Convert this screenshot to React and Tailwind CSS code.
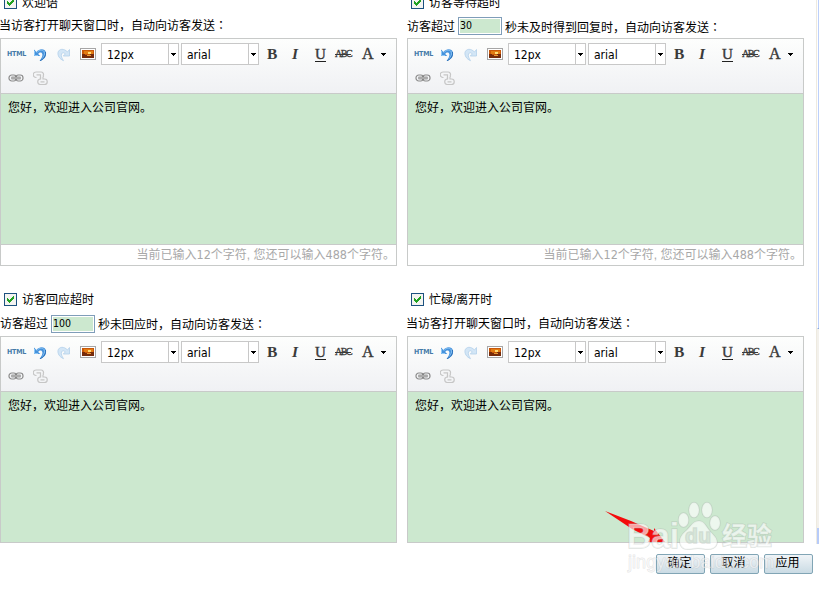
import { useState } from "react";

function Checkbox() {
  return (
    <span className="w-[13px] h-[13px] shrink-0 border border-[#1c5180] bg-[#f4f4f1] flex">
      <svg width="11" height="11" viewBox="0 0 11 11" shapeRendering="crispEdges">
        <path d="M2 4h1v1h1v1h1v-1h1v-1h1v-1h1v-1h1v3h-1v1h-1v1h-1v1h-1v1h-1v-1h-1v-1h-1z" fill="#21a121" />
      </svg>
    </span>
  );
}

function UndoIcon() {
  return (
    <svg width="14" height="14" viewBox="0 0 14 14">
      <path d="M1 1.500v6.500h6.300L5.200 5.900C6.500 4 8.600 4 9.200 5.700c.7 1.900-.4 4.300-2.700 7.300 5-1.300 7.200-5.200 6.400-8.800C12.200.8 6.600-.3 3.400 4z" fill="#4592dc" />
      <path d="M1.500 3v4.500h3.600M3.800 4.700C6 1.900 9.500 1.300 11 3.500c1.200 2.200.1 5-1.500 7" fill="none" stroke="#8fc7f5" strokeWidth="1" />
      <path d="M12.400 4c.7 3.600-1.400 6.900-5.300 8.700" fill="none" stroke="#2a6eb6" strokeWidth="1" />
    </svg>
  );
}

function RedoIcon() {
  return (
    <svg width="14" height="14" viewBox="0 0 14 14">
      <path d="M12.500 1.500v6.500h-6.200l2-2C7.200 4.200 5.200 4.300 4.500 6c-.6 1.900.4 4.300 2 6.700C2.500 11 .4 7.500 1 4.400 2 .5 7.200.2 10.400 4z" fill="#d3e6f6" stroke="#b4d1ea" strokeWidth=".8" />
    </svg>
  );
}

function PictureIcon() {
  return (
    <svg width="16" height="12" viewBox="0 0 16 12" shapeRendering="crispEdges" className="block">
      <rect x=".5" y=".5" width="15" height="11" fill="#fff" stroke="#a6a6a6" />
      <rect x="2" y="2" width="12" height="8" fill="#c95708" />
      <rect x="4" y="3" width="9" height="3" fill="#e27c12" />
      <rect x="8" y="4" width="3" height="2" fill="#ffdc73" />
      <path d="M2 6h3v1h5v-1h4v4H2z" fill="#762b0b" />
      <path d="M7 7h4v1H7z" fill="#e79a34" />
    </svg>
  );
}

function LinkIcon() {
  return (
    <svg width="16" height="8" viewBox="0 0 16 8" fill="none">
      <rect x="1" y="1" width="7.500" height="6" rx="2.800" stroke="#8b8b8b" strokeWidth="1.200" />
      <rect x="7.500" y="1" width="7.500" height="6" rx="2.800" stroke="#8b8b8b" strokeWidth="1.200" />
      <path d="M3.500 4h9" stroke="#666" strokeWidth="2.600" />
      <path d="M4 4h8" stroke="#eee" strokeWidth="1" />
    </svg>
  );
}

function UnlinkIcon() {
  return (
    <svg width="15" height="15" viewBox="0 0 15 15" fill="none" stroke="#c6c6c6">
      <path d="M3.500 6.500H3a2.500 2.500 0 0 1 0-5.500h5a2.500 2.500 0 0 1 2.300 3.500v1.500M3.500 3.800h4v4.500" strokeWidth="1.200" />
      <path d="M7.500 6v2H7a2.800 2.800 0 0 0 0 5.500h4.500a2.700 2.700 0 0 0 0-5.500H10V6M7.500 10.800h4" strokeWidth="1.200" />
    </svg>
  );
}

function Caret() {
  return (
    <svg width="5" height="3" viewBox="0 0 5 3" shapeRendering="crispEdges" className="block shrink-0">
      <path d="M0 0h5v1h-1v1h-1v1h-1v-1h-1v-1h-1z" fill="#000" />
    </svg>
  );
}

function Select({ value }) {
  return (
    <div className="w-[78px] h-[22px] shrink-0 border border-[#c8c8c8] bg-white flex">
      <span className="flex-1 pl-[5px] pt-px leading-5 text-black font-['DejaVu_Sans_Condensed','DejaVu_Sans',sans-serif]">{value}</span>
      <span className="w-[10px] border-l border-[#c8c8c8] flex items-center justify-center">
        <Caret />
      </span>
    </div>
  );
}

function Toolbar() {
  return (
    <div className="h-[55px] border-b border-[#c8cac9] bg-linear-to-b from-[#fdfefd] to-[#f0f1f4] pt-[3px]">
      <div className="h-6 flex items-center text-[#3a3a3a] font-['Liberation_Serif',serif]">
        <span className="w-8 shrink-0 pl-[6px] text-[7px] font-bold leading-none tracking-[-0.2px] text-[#457ba9] font-['DejaVu_Sans_Condensed','DejaVu_Sans',sans-serif]">HTML</span>
        <span className="w-6 shrink-0 pt-0.5"><UndoIcon /></span>
        <span className="w-[23px] shrink-0 pt-0.5"><RedoIcon /></span>
        <span className="w-[21px] shrink-0"><PictureIcon /></span>
        <Select value="12px" />
        <span className="w-0.5" />
        <Select value="arial" />
        <span className="w-[25px] shrink-0 pl-2 text-[15.5px] font-bold leading-6">B</span>
        <span className="w-[23px] shrink-0 pl-2 text-[15.5px] font-bold italic leading-6">I</span>
        <span className="w-[22px] shrink-0 pl-[8px] text-[15px] leading-[14px]">
          <span className="block w-[11px] h-[15px] border-b border-[#222] [-webkit-text-stroke:0.4px]">U</span>
        </span>
        <span className="w-[25px] shrink-0 pl-[6px] text-[10px] leading-6 tracking-[-1.5px] line-through [-webkit-text-stroke:0.3px]">ABC</span>
        <span className="w-[22px] shrink-0 pl-[8px] text-[16px] leading-[22px] pb-px [-webkit-text-stroke:0.4px]">A</span>
        <span className="pl-[5px] pt-px"><Caret /></span>
      </div>
      <div className="h-6 pl-[7px] flex items-center gap-[9px]">
        <LinkIcon />
        <UnlinkIcon />
      </div>
    </div>
  );
}

function Editor({ status }) {
  const [text, setText] = useState("您好，欢迎进入公司官网。");
  return (
    <div className="border border-[#c8cac9] bg-white">
      <Toolbar />
      <textarea
        value={text}
        onChange={(e) => setText(e.target.value)}
        className="block w-full h-[150px] px-[7px] py-[5px] leading-[19px] bg-[#cce8cf] resize-none outline-none"
      />
      {status && (
        <div className="h-[21px] border-t border-[#c8cac9] pr-px text-right leading-5 text-[#a8a8a8]">
          当前已输入<Num>12</Num>个字符, 您还可以输入<Num>488</Num>个字符。
        </div>
      )}
    </div>
  );
}

function Num({ children }) {
  return <span className="text-[12.5px] font-['DejaVu_Sans_Condensed','DejaVu_Sans',sans-serif]">{children}</span>;
}

function Colon() {
  return <span className="font-['Noto_Sans_CJK_TC',sans-serif]" lang="zh-TW">：</span>;
}

function SecondsInput({ value }) {
  return (
    <input
      defaultValue={value}
      className="w-11 h-[18px] mx-[3px] border border-[#7f9db9] bg-[#cce8cf] pl-px pb-0.5 text-[10.5px] font-['DejaVu_Sans_Condensed','DejaVu_Sans',sans-serif] shadow-[inset_0_0_0_1px_#fff] outline-none"
    />
  );
}

function Title({ children }) {
  return (
    <div className="h-[18px] pl-1 flex items-center gap-[5px]">
      <Checkbox />
      <span className="pt-px">{children}</span>
    </div>
  );
}

function Watermark() {
  return (
    <svg className="absolute left-[600px] top-[490px] pointer-events-none" width="219" height="100" viewBox="600 490 219 100">
      <path d="M605 511L631 521L654 531L654 528L665 542L648 542L650 538L632 529z" fill="#f40c0c" />
      <g fill="#fff" fillOpacity=".65" stroke="#a9b5ad" strokeOpacity=".4" strokeWidth="1.500" paintOrder="stroke">
        <ellipse cx="683.500" cy="520" rx="5" ry="7" />
        <ellipse cx="694" cy="510" rx="5" ry="7.500" />
        <ellipse cx="707" cy="510" rx="5" ry="7.500" />
        <ellipse cx="715" cy="523" rx="5" ry="7" />
        <path d="M699 521c-6 0-8 5-12 9-5 4-8 8-7 13 1 6 6 7 11 6 5-1 9-1 14 0 6 1 12-1 12-7 0-5-5-8-8-12-3-4-5-9-10-9z" />
        <text x="627" y="548" fontSize="35" fontWeight="bold" fontFamily="Liberation Sans, sans-serif" textLength="52" lengthAdjust="spacingAndGlyphs">Bai</text>
        <text x="685" y="543" fontSize="21" fontWeight="bold" fontFamily="Liberation Sans, sans-serif" textLength="26" fill="#cfe0d2">du</text>
        <text x="722" y="545" fontSize="25" fontWeight="bold" fontFamily="Noto Sans CJK SC, sans-serif">经验</text>
        <text x="628" y="568" fontSize="18" fontFamily="Liberation Sans, sans-serif" textLength="146" fillOpacity=".5" stroke="#aaa" strokeOpacity=".3" strokeWidth="1">jingyan.baidu.com</text>
      </g>
    </svg>
  );
}

export default function App() {
  return (
    <div className="relative w-[819px] h-[590px] overflow-hidden bg-white text-black text-xs leading-[18px] font-['Liberation_Sans','Noto_Sans_CJK_SC',sans-serif]">
      <div className="h-[544px] flex overflow-hidden">
        <div className="w-[397px] -mt-[7px]">
          <Title>欢迎语</Title>
          <div className="h-[27px] -ml-px pt-[5px]">当访客打开聊天窗口时，自动向访客发送<Colon /></div>
          <Editor status />
          <div className="h-6" />
          <Title>访客回应超时</Title>
          <div className="h-[28px] pt-[7px] flex items-start whitespace-nowrap">
            <span>访客超过</span>
            <SecondsInput value="100" />
            <span>秒未回应时，自动向访客发送<Colon /></span>
          </div>
          <Editor />
        </div>
        <div className="w-[397px] ml-[10px] -mt-[7px]">
          <Title>访客等待超时</Title>
          <div className="h-[27px] pt-[6px] flex items-start whitespace-nowrap">
            <span className="pt-px">访客超过</span>
            <SecondsInput value="30" />
            <span className="pt-px">秒未及时得到回复时，自动向访客发送<Colon /></span>
          </div>
          <Editor status />
          <div className="h-6" />
          <Title>忙碌/离开时</Title>
          <div className="h-[28px] -ml-px pt-[6px]">当访客打开聊天窗口时，自动向访客发送<Colon /></div>
          <Editor />
        </div>
        <div className="ml-3 w-[3px] border-l border-[#eeeae0] bg-[#f3f1ec] flex flex-col">
          <div className="h-[337px] border-b border-[#8aa8db] border-l border-l-white bg-[#bdd0fa] -mt-2" />
          <div className="flex-1" />
          <div className="h-4 bg-[#b7cbf9]" />
        </div>
      </div>
      <div className="flex justify-end gap-[5px] pt-[10px] pr-1.5">
        {["确定", "取消", "应用"].map((label) => (
          <button
            key={label}
            className="w-[49px] h-5 rounded-[2px] border border-[#81a5b5] bg-linear-to-b from-[#f0f4f7] to-[#cadbe4] pr-0.5 pb-px leading-[17px]"
          >
            {label}
          </button>
        ))}
      </div>
      <Watermark />
    </div>
  );
}
